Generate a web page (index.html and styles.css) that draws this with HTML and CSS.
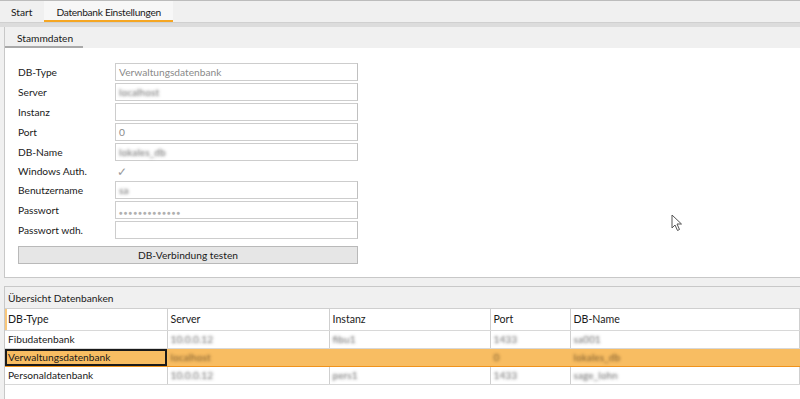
FILE: index.html
```html
<!DOCTYPE html>
<html lang="de">
<head>
    <meta charset="UTF-8">
    <title>Datenbank Einstellungen</title>
    <link rel="stylesheet" href="styles.css">
</head>
<body>
    <!-- Hauptreiter -->
    <div class="tabbar">
        <div class="tab">Start</div>
        <div class="tab active">Datenbank Einstellungen</div>
    </div>

    <div class="content">
        <!-- Stammdaten -->
        <div class="panel panel-form">
            <div class="subtabs">
                <div class="subtab">Stammdaten</div>
            </div>
            <div class="form">
                <div class="row"><label>DB-Type</label><div class="field">Verwaltungsdatenbank</div></div>
                <div class="row"><label>Server</label><div class="field"><span class="blur">localhost</span></div></div>
                <div class="row"><label>Instanz</label><div class="field"></div></div>
                <div class="row"><label>Port</label><div class="field">0</div></div>
                <div class="row"><label>DB-Name</label><div class="field"><span class="blur">lokales_db</span></div></div>
                <div class="row row-check"><label>Windows Auth.</label><div class="check">&#10003;</div></div>
                <div class="row"><label>Benutzername</label><div class="field"><span class="blur">sa</span></div></div>
                <div class="row"><label>Passwort</label><div class="field pw">&#9679;&#9679;&#9679;&#9679;&#9679;&#9679;&#9679;&#9679;&#9679;&#9679;&#9679;&#9679;&#9679;</div></div>
                <div class="row"><label>Passwort wdh.</label><div class="field"></div></div>
                <button class="btn">DB-Verbindung testen</button>
            </div>
        </div>

        <!-- Übersicht -->
        <div class="panel panel-grid">
            <div class="grid-title">Übersicht Datenbanken</div>
            <table class="grid">
                <thead>
                    <tr>
                        <th class="c1 first">DB-Type</th>
                        <th class="c2">Server</th>
                        <th class="c3">Instanz</th>
                        <th class="c4">Port</th>
                        <th class="c5">DB-Name</th>
                    </tr>
                </thead>
                <tbody>
                    <tr>
                        <td>Fibudatenbank</td>
                        <td><span class="blur">10.0.0.12</span></td>
                        <td><span class="blur">fibu1</span></td>
                        <td><span class="blur">1433</span></td>
                        <td><span class="blur">sa001</span></td>
                    </tr>
                    <tr class="selected">
                        <td class="current">Verwaltungsdatenbank</td>
                        <td><span class="blur">localhost</span></td>
                        <td></td>
                        <td><span class="blur">0</span></td>
                        <td><span class="blur">lokales_db</span></td>
                    </tr>
                    <tr>
                        <td>Personaldatenbank</td>
                        <td><span class="blur">10.0.0.12</span></td>
                        <td><span class="blur">pers1</span></td>
                        <td><span class="blur">1433</span></td>
                        <td><span class="blur">sage_lohn</span></td>
                    </tr>
                </tbody>
            </table>
        </div>

        <!-- Mauszeiger -->
        <svg class="cursor" width="12" height="18" viewBox="0 0 12 18">
            <path d="M1 1 L1 14 L4 11 L6.5 16.5 L8.5 15.5 L6 10 L10.5 10 Z" fill="#ffffff" stroke="#555" stroke-width="1" stroke-linejoin="round"/>
        </svg>
    </div>
</body>
</html>
```

FILE: styles.css
```css
* {
    margin: 0;
    padding: 0;
    box-sizing: border-box;
}

html, body {
    width: 100%;
    height: 100%;
    overflow: hidden;
}

body {
    font-family: 'Lato', 'Noto Sans', sans-serif;
    font-size: 10.2px;
    color: #1a1a1a;
    background: #f0f0f0;
}

/* Hauptreiter */
.tabbar {
    height: 23px;
    display: flex;
    border-top: 1px solid #bcbcbc;
    border-bottom: 1px solid #d0d0d0;
    background: #f0f0f0;
    padding-left: 3px;
}

.tab {
    padding: 5px 12px 0 8px;
    height: 21px;
}

.tab.active {
    padding: 5px 12px 0 12px;
    letter-spacing: -0.3px;
    background: #f7f7f7;
    border-bottom: 2px solid #f5a623;
}

.content {
    position: relative;
    height: calc(100% - 23px);
    overflow: hidden;
    border-top: 4px solid #dcdcdc;
    padding-left: 4px;
}

.panel {
    border-left: 1px solid #c8c8c8;
    background: #ffffff;
}

/* Stammdaten */
.panel-form {
    border-bottom: 1px solid #c8c8c8;
}

.subtabs {
    height: 21px;
    background: #f0f0f0;
    display: flex;
}

.subtab {
    width: 78px;
    padding: 5px 0 0 12px;
    border-bottom: 2px solid #a9a9a9;
}

.form {
    padding: 14px 0 13px 13px;
    width: 358px;
}

.row {
    display: flex;
    align-items: center;
    height: 20px;
}

.row label {
    width: 97px;
}

.field {
    width: 243px;
    height: 18px;
    border: 1px solid #cdcdcd;
    border-right-color: #c0c0c0;
    color: #8a8a8a;
    padding: 1px 0 0 3px;
    line-height: 15px;
}

.field.pw {
    font-size: 6px;
    letter-spacing: 1.2px;
    color: #b0b0b0;
    padding-top: 3px;
}

.row-check {
    height: 18px;
}

.check {
    width: 13px;
    height: 13px;
    font-size: 12px;
    line-height: 13px;
    color: #9a9a9a;
    text-align: center;
}

/* unkenntlich gemachte Werte */
.blur {
    color: transparent;
    text-shadow: 0 0 3px rgba(90, 90, 90, 0.9);
}

.btn {
    display: block;
    margin-top: 6px;
    width: 340px;
    height: 18px;
    font: inherit;
    color: #1a1a1a;
    background: #e6e6e6;
    border: 1px solid #b9b9b9;
}

/* Übersicht */
.panel-grid {
    margin-top: 8px;
    border-top: 1px solid #c8c8c8;
    height: 200px;
}

.grid-title {
    height: 22px;
    padding: 5px 0 0 3px;
    background: #f0f0f0;
    border-bottom: 1px solid #cfcfcf;
}

.grid {
    border-collapse: collapse;
    width: 100%;
    table-layout: fixed;
}

.grid th,
.grid td {
    text-align: left;
    font-weight: normal;
    border-right: 1px solid #cfcfcf;
    border-bottom: 1px solid #d8d8d8;
    padding: 0 0 0 3px;
    white-space: nowrap;
    overflow: hidden;
}

.grid th {
    height: 21px;
    font-size: 10.6px;
}

.grid td {
    height: 18px;
    line-height: 16px;
}

.grid th.first {
    box-shadow: inset 2px 0 0 #f9c77a;
}

.c1 { width: 162px; }
.c2 { width: 162px; }
.c3 { width: 161px; }
.c4 { width: 80px; }

.grid tr.selected td {
    background: #f8bd62;
    border-top: 1px solid #f0931c;
    border-bottom: 1px solid #f0931c;
    border-right-color: #f8bd62;
}

.grid tr.selected td.current {
    box-shadow: inset 0 0 0 2px #1a1a1a;
    color: #1a1a1a;
}

.grid tr.selected .blur {
    text-shadow: 0 0 3px rgba(110, 80, 40, 0.9);
}

.cursor {
    position: absolute;
    left: 671px;
    top: 187px;
}
```
